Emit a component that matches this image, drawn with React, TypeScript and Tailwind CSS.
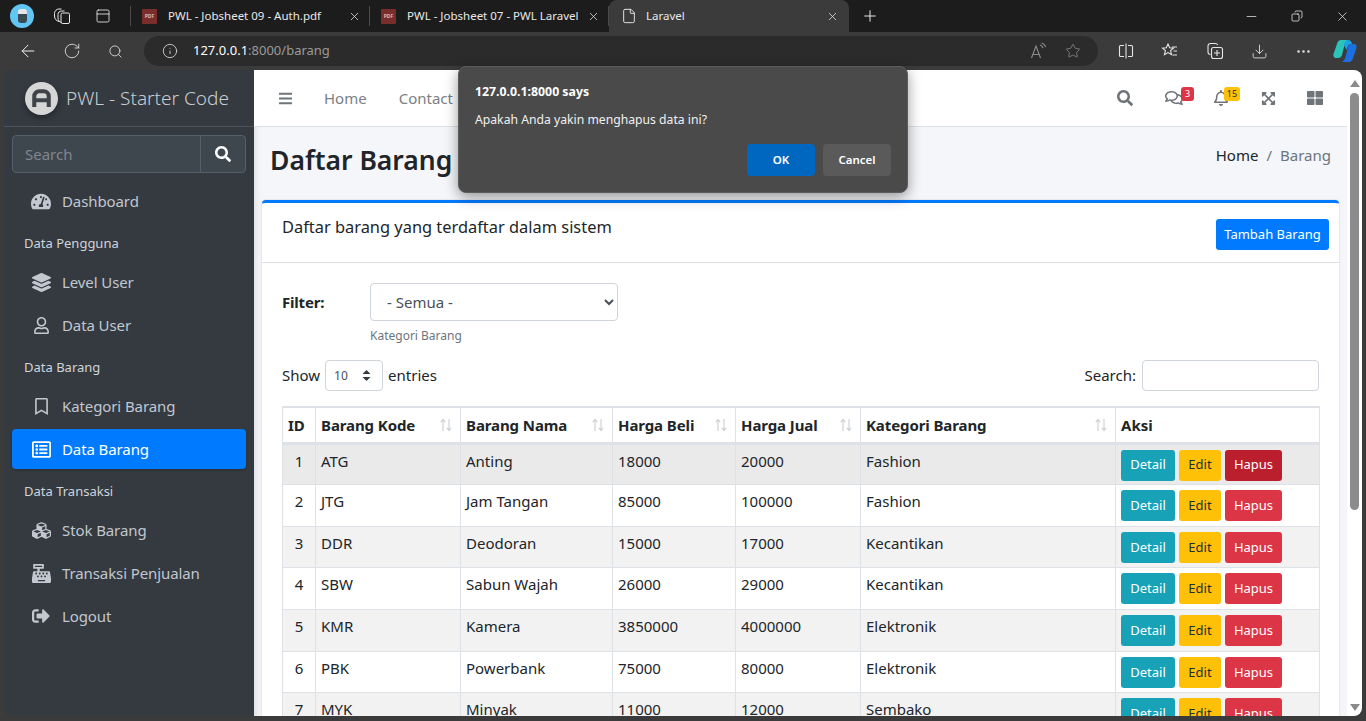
import React from 'react';
import {
  ArrowLeft,
  Copy,
  Download,
  Ellipsis,
  File,
  Info,
  Minus,
  PanelTop,
  Plus,
  RotateCw,
  Search,
  Star,
  X,
} from 'lucide-react';
import {
  FaBars,
  FaCashRegister,
  FaCubes,
  FaExpandArrowsAlt,
  FaRegBell,
  FaRegBookmark,
  FaRegComments,
  FaRegListAlt,
  FaRegUser,
  FaSearch,
  FaSignOutAlt,
  FaTachometerAlt,
  FaThLarge,
  FaLayerGroup,
} from 'react-icons/fa';

const rows = [
  ['1', 'ATG', 'Anting', '18000', '20000', 'Fashion'],
  ['2', 'JTG', 'Jam Tangan', '85000', '100000', 'Fashion'],
  ['3', 'DDR', 'Deodoran', '15000', '17000', 'Kecantikan'],
  ['4', 'SBW', 'Sabun Wajah', '26000', '29000', 'Kecantikan'],
  ['5', 'KMR', 'Kamera', '3850000', '4000000', 'Elektronik'],
  ['6', 'PBK', 'Powerbank', '75000', '80000', 'Elektronik'],
  ['7', 'MYK', 'Minyak', '11000', '12000', 'Sembako'],
];

function PdfIcon() {
  return (
    <div className="w-[15px] h-[15px] bg-[#7a2e2b] flex items-center justify-center rounded-[1px]">
      <span className="text-[5px] font-bold leading-none text-[#d8b5b3]">PDF</span>
    </div>
  );
}

function Tab({ title, pdf, active }: { title: string; pdf?: boolean; active?: boolean }) {
  return (
    <div
      className={
        active
          ? 'w-[240px] h-[32px] flex items-center pl-[12px] pr-[10px] bg-[#3b3b3b] rounded-t-[8px]'
          : 'w-[239px] h-[20px] flex items-center pl-[11px] pr-[8px] border-r border-[#4a4a4a] my-auto'
      }
    >
      {pdf ? <PdfIcon /> : <File size={16} strokeWidth={1.4} className="text-[#eeeeee]" />}
      <span className={'flex-1 text-[11.5px] text-[#e8e8e8] overflow-hidden whitespace-nowrap ' + (active ? 'ml-[9px]' : 'ml-[11px]')}>{title}</span>
      <X size={13} strokeWidth={1.4} className="text-[#e8e8e8]" />
    </div>
  );
}

function TabActionsIcon() {
  return (
    <svg width="18" height="18" viewBox="0 0 18 18" fill="none" stroke="#e8e8e8" strokeWidth="1">
      <path d="M6 14.500C3.500 14 1.500 12 1.500 9V6.500C1.500 4 3.500 2 6 2h2.500" />
      <path d="M8.500 15.500C6.500 15 5 13.500 5 11V7.500C5 5.500 6.500 4 8.500 4h3" />
      <rect x="8" y="6" width="8.500" height="10.500" rx="1.500" />
    </svg>
  );
}

function SplitIcon() {
  return (
    <svg width="16" height="16" viewBox="0 0 16 16" fill="none" stroke="#e6e6e6" strokeWidth="1.1">
      <path d="M6 2.500H2.500a1 1 0 0 0-1 1v9a1 1 0 0 0 1 1H6" />
      <path d="M10 2.500h3.500a1 1 0 0 1 1 1v9a1 1 0 0 1-1 1H10" />
      <path d="M8 0.500v15" />
    </svg>
  );
}

function FavListIcon() {
  return (
    <svg width="18" height="18" viewBox="0 0 18 18" fill="none" stroke="#e6e6e6" strokeWidth="1.1">
      <path d="M7 2l1.700 3.700 3.800.4-2.900 2.600.9 4-3.500-2.100-3.500 2.100.9-4L1.500 6.100l3.800-.4z" />
      <path d="M11 5h5M12.500 9H16M11.500 13H16" />
    </svg>
  );
}

function CollectionIcon() {
  return (
    <svg width="18" height="18" viewBox="0 0 18 18" fill="none" stroke="#e6e6e6" strokeWidth="1.1">
      <path d="M4.500 12.500A2.500 2.500 0 0 1 2 10V4a2.500 2.500 0 0 1 2.500-2.500h5a2.500 2.500 0 0 1 2.200 1.500" />
      <rect x="5.500" y="5.500" width="11" height="11" rx="2" />
      <path d="M11 8v6M8 11h6" />
    </svg>
  );
}

function ReadAloudIcon() {
  return (
    <svg width="18" height="18" viewBox="0 0 18 18" fill="none" stroke="#8c8c8c" strokeWidth="1.1">
      <path d="M1.500 16L6 4l4.500 12M3 12.500h6" />
      <path d="M10 3c1.500.5 2.500 1.500 3 3M11.500 1c2 .6 3.500 2 4.200 4" />
    </svg>
  );
}

function CopilotIcon() {
  return (
    <svg width="24" height="24" viewBox="0 0 24 24">
      <path d="M8 1h7c-2 1-3 3-3.500 5L9 16c-.5 2-2 3-4 3H3c-2 0-3-2-2.500-4L4 5c.7-2.500 2-4 4-4z" fill="#2cc4b8" />
      <path d="M16 23H9c2-1 3-3 3.500-5L15 8c.5-2 2-3 4-3h2c2 0 3 2 2.500 4L20 19c-.7 2.500-2 4-4 4z" fill="#1c6fe0" />
      <path d="M15 1c2 0 3.500 1.500 4 4h-1c-1.500 0-3 1-3.500 3l-1 3-2.500-5c.5-2 2-5 4-5z" fill="#1aa3e8" />
    </svg>
  );
}

function BrandLogo() {
  return (
    <div className="w-[33px] h-[33px] rounded-full bg-[#d6d6d6] flex items-center justify-center shadow-[0_3px_6px_rgba(0,0,0,0.35)]">
      <svg width="19" height="19" viewBox="0 0 21 21" fill="none" stroke="#40444a" strokeWidth="4.500">
        <path d="M2.500 20V8a5.500 5.500 0 0 1 5.500-5.500h5A5.500 5.500 0 0 1 18.500 8v12" />
        <path d="M3 12.500h15" />
      </svg>
    </div>
  );
}

function NavItem({ icon, label, active }: { icon: React.ReactNode; label: string; active?: boolean }) {
  return (
    <div
      className={
        'h-[40px] mb-[3px] flex items-center pl-[19px] rounded-[4px] text-[15px] ' +
        (active ? 'bg-[#007bff] text-white shadow-[0_1px_3px_rgba(0,0,0,0.25)]' : 'text-[#c2c7d0]')
      }
    >
      <span className="w-[20px] flex justify-center">{icon}</span>
      <span className="ml-[11px] tracking-[-0.1px]">{label}</span>
    </div>
  );
}

function NavHeader({ label }: { label: string }) {
  return <div className="h-[38px] flex items-center pl-[12px] pt-[1px] text-[13px] text-[#d0d4db]">{label}</div>;
}

function Sidebar() {
  return (
    <aside className="w-[250px] shrink-0 bg-[#343a40] flex flex-col">
      <div className="h-[57px] flex items-center pl-[21px] border-b border-[#4b545c]">
        <BrandLogo />
        <span className="ml-[8px] pt-[1px] text-[19px] font-light text-[#c9ccd0]">PWL - Starter Code</span>
      </div>
      <div className="px-[8px] pt-[8px]">
        <div className="h-[38px] flex rounded-[4px] border border-[#56606a] bg-[#3f474e] mb-[8px]">
          <div className="flex-1 flex items-center pl-[12px] pt-[1px] text-[15px] text-[#7f8790]">Search</div>
          <div className="w-[45px] border-l border-[#56606a] flex items-center justify-center">
            <FaSearch size={16} className="text-white" />
          </div>
        </div>
        <NavItem icon={<FaTachometerAlt size={21} />} label="Dashboard" />
        <NavHeader label="Data Pengguna" />
        <NavItem icon={<FaLayerGroup size={19} />} label="Level User" />
        <NavItem icon={<FaRegUser size={17} />} label="Data User" />
        <NavHeader label="Data Barang" />
        <NavItem icon={<FaRegBookmark size={17} />} label="Kategori Barang" />
        <NavItem icon={<FaRegListAlt size={19} />} label="Data Barang" active />
        <NavHeader label="Data Transaksi" />
        <NavItem icon={<FaCubes size={19} />} label="Stok Barang" />
        <NavItem icon={<FaCashRegister size={19} />} label="Transaksi Penjualan" />
        <NavItem icon={<FaSignOutAlt size={18} />} label="Logout" />
      </div>
    </aside>
  );
}

function TopNav() {
  return (
    <div className="h-[57px] shrink-0 bg-white border-b border-[#dee2e6] flex items-center">
      <FaBars size={15} className="ml-[24px] text-[#6f7479]" />
      <span className="ml-[31px] text-[15px] text-[#7a8085]">Home</span>
      <span className="ml-[32px] text-[15px] text-[#7a8085]">Contact</span>
      <div className="flex-1" />
      <FaSearch size={16} className="text-[#6f7479]" />
      <div className="relative ml-[32px] w-[18px]">
        <FaRegComments size={18} className="text-[#6f7479]" />
        <span className="absolute -top-[2px] left-[16px] w-[13px] h-[14px] rounded-[3px] bg-[#dc3545] text-white text-[9px] leading-[14px] text-center">
          3
        </span>
      </div>
      <div className="relative ml-[30px] w-[16px]">
        <FaRegBell size={16} className="text-[#6f7479]" />
        <span className="absolute -top-[3px] left-[11px] w-[16px] h-[14px] rounded-[3px] bg-[#ffc107] text-[#1f2d3d] text-[9px] leading-[14px] text-center">
          15
        </span>
      </div>
      <FaExpandArrowsAlt size={15} className="ml-[32px] text-[#6f7479]" />
      <FaThLarge size={16} className="ml-[31px] mr-[24px] text-[#6f7479]" />
    </div>
  );
}

function SortArrows() {
  return (
    <svg width="12" height="14" viewBox="0 0 12 14" fill="none" stroke="#cfd2d5" strokeWidth="1.200">
      <path d="M3 13V2M.8 4.200L3 1.500l2.200 2.700" />
      <path d="M9 1v11M6.800 9.800L9 12.500l2.200-2.700" />
    </svg>
  );
}

function BarangTable() {
  const th = 'border border-[#dee2e6] border-b-[3px] px-[5px] text-left align-middle font-bold';
  const td = 'border border-[#dee2e6] px-[5px] pt-[5px] align-top';
  const heads = ['Barang Kode', 'Barang Nama', 'Harga Beli', 'Harga Jual', 'Kategori Barang'];
  return (
    <table className="w-[1037px] table-fixed border-collapse text-[15px] text-[#212529] border-t-[2px] border-[#dee2e6]">
      <colgroup>
        <col className="w-[33px]" />
        <col className="w-[145px]" />
        <col className="w-[152px]" />
        <col className="w-[123px]" />
        <col className="w-[125px]" />
        <col className="w-[255px]" />
        <col className="w-[204px]" />
      </colgroup>
      <thead>
        <tr className="h-[36px]">
          <th className={th + ' text-center'}>ID</th>
          {heads.map((h) => (
            <th key={h} className={th}>
              <div className="flex items-center justify-between pr-[3px] tracking-[-0.1px]">
                <span>{h}</span>
                <SortArrows />
              </div>
            </th>
          ))}
          <th className={th}>Aksi</th>
        </tr>
      </thead>
      <tbody>
        {rows.map((r, i) => (
          <tr key={r[0]} className={'h-[41.67px] ' + (i === 0 ? 'bg-[#eaeaea]' : i % 2 === 0 ? 'bg-[#f2f2f2]' : 'bg-white')}>
            <td className={td + ' text-center'}>{r[0]}</td>
            {r.slice(1).map((c, j) => (
              <td key={j} className={td}>
                {c}
              </td>
            ))}
            <td className={td}>
              <div className="flex gap-[4px] text-[13px]">
                <span className="w-[54px] h-[31px] rounded-[3px] bg-[#17a2b8] text-white flex items-center justify-center">Detail</span>
                <span className="w-[42px] h-[31px] rounded-[3px] bg-[#ffc107] text-[#1f2d3d] flex items-center justify-center">Edit</span>
                <span className={'w-[57px] h-[31px] rounded-[3px] text-white flex items-center justify-center ' + (i === 0 ? 'bg-[#bb1f2e]' : 'bg-[#dc3545]')}>
                  Hapus
                </span>
              </div>
            </td>
          </tr>
        ))}
      </tbody>
    </table>
  );
}

function CardBody() {
  return (
    <div className="pl-[20px] pr-[20px] pt-[20px]">
      <div className="flex">
        <div className="w-[88px] pt-[8px] text-[15px] font-bold tracking-[-0.2px] text-[#212529]">Filter:</div>
        <div>
          <select className="w-[248px] h-[38px] rounded-[4px] border border-[#ced4da] bg-white pl-[12px] text-[15px] text-[#495057]">
            <option>- Semua -</option>
          </select>
          <div className="mt-[6px] text-[12px] text-[#6c757d]">Kategori Barang</div>
        </div>
      </div>
      <div className="mt-[15px] flex items-center text-[15px] text-[#212529]">
        <span>Show</span>
        <div className="relative ml-[5px] mr-[5px]">
          <select className="w-[58px] h-[31px] appearance-none rounded-[4px] border border-[#ced4da] bg-white pl-[8px] text-[12px] text-[#495057]">
            <option>10</option>
          </select>
          <svg className="absolute right-[12px] top-[10px]" width="9" height="11" viewBox="0 0 9 11" fill="#343a40">
            <path d="M4.500 0L8.500 4H.5zM4.500 11L.5 7h8z" />
          </svg>
        </div>
        <span>entries</span>
        <div className="flex-1" />
        <span>Search:</span>
        <div className="ml-[6px] w-[177px] h-[31px] rounded-[4px] border border-[#ced4da] bg-white" />
      </div>
      <div className="mt-[15px]">
        <BarangTable />
      </div>
    </div>
  );
}

function ContentArea() {
  return (
    <div className="flex-1 min-h-0 bg-[#f4f6f9] flex flex-col overflow-hidden shadow-[inset_8px_0_8px_-8px_rgba(0,0,0,0.15)]">
      <div className="h-[73px] shrink-0 flex items-start pl-[16px] pr-[16px]">
        <h1 className="mt-[14px] text-[26.500px] font-semibold text-[#212529]">Daftar Barang</h1>
        <div className="flex-1" />
        <div className="mt-[17px] text-[15px] text-[#212529]">
          Home<span className="mx-[8px] text-[#6c757d]">/</span>
          <span className="text-[#6c757d]">Barang</span>
        </div>
      </div>
      <div className="ml-[8px] mr-[8px] flex-1 bg-white border-t-[3px] border-[#007bff] rounded-t-[4px] shadow-[0_0_2px_rgba(0,0,0,0.2)]">
        <div className="h-[60px] flex items-start border-b border-[#dfdfdf] pl-[20px] pr-[10px]">
          <h3 className="mt-[12px] text-[16.400px] text-[#212529]">Daftar barang yang terdaftar dalam sistem</h3>
          <div className="flex-1" />
          <div className="mt-[16px] w-[113px] h-[31px] rounded-[3px] bg-[#007bff] text-white text-[13px] flex items-center justify-center">
            Tambah Barang
          </div>
        </div>
        <CardBody />
      </div>
    </div>
  );
}

function Scrollbar() {
  return (
    <div className="w-[15px] shrink-0 bg-white flex flex-col items-center">
      <svg className="mt-[10px]" width="10" height="7" viewBox="0 0 10 7" fill="#8a8a8a">
        <path d="M5 0l5 7H0z" />
      </svg>
      <div className="mt-[6px] w-[9px] h-[417px] rounded-[5px] bg-[#8c8c8c]" />
      <div className="flex-1" />
      <svg className="mb-[5px]" width="10" height="7" viewBox="0 0 10 7" fill="#8a8a8a">
        <path d="M5 7L0 0h10z" />
      </svg>
    </div>
  );
}

function ConfirmDialog() {
  return (
    <div className="absolute left-[458px] top-[66px] w-[450px] h-[127px] rounded-[8px] border border-[#5c5c5c] bg-[#4a4a4a] shadow-[0_4px_14px_rgba(0,0,0,0.4)] pl-[16px] pr-[16px] pt-[16px] text-white">
      <div className="text-[12.300px] font-bold leading-[18px]">127.0.0.1:8000 says</div>
      <div className="mt-[10px] text-[12.200px] leading-[18px] text-[#f0f0f0]">Apakah Anda yakin menghapus data ini?</div>
      <div className="mt-[15px] flex justify-end gap-[8px]">
        <div className="w-[68px] h-[32px] rounded-[4px] bg-[#0067c0] flex items-center justify-center text-[11.500px] font-semibold">OK</div>
        <div className="w-[68px] h-[32px] rounded-[4px] bg-[#5a5a5a] flex items-center justify-center text-[11.500px] font-semibold">Cancel</div>
      </div>
    </div>
  );
}

export default function App() {
  return (
    <div className="relative w-[1366px] h-[721px] overflow-hidden bg-[#3b3b3b] flex flex-col font-['Noto_Sans',sans-serif]">
      {/* Browser tabs */}
      <div className="h-[32px] shrink-0 bg-[#1c1c1c] flex items-center">
        <div className="ml-[10px] w-[24px] h-[24px] rounded-full bg-[#62c6f5] flex items-center justify-center">
          <div className="w-[9px] h-[14px] rounded-[3px] bg-[#3a4a55] border-t-[5px] border-[#e6e6e6]" />
        </div>
        <div className="ml-[19px]">
          <TabActionsIcon />
        </div>
        <PanelTop size={16} strokeWidth={1.3} className="ml-[24px] text-[#e8e8e8]" />
        <div className="ml-[19px] h-[20px] border-l border-[#4a4a4a]" />
        <Tab title="PWL - Jobsheet 09 - Auth.pdf" pdf />
        <Tab title="PWL - Jobsheet 07 - PWL Laravel" pdf />
        <Tab title="Laravel" active />
        <Plus size={18} strokeWidth={1.3} className="ml-[12px] text-[#eeeeee]" />
        <div className="flex-1" />
        <Minus size={15} strokeWidth={1.2} className="text-[#e8e8e8]" />
        <Copy size={12} strokeWidth={1.5} className="ml-[32px] -scale-x-100 text-[#f0f0f0]" />
        <X size={15} strokeWidth={1.2} className="ml-[32px] mr-[16px] text-[#e8e8e8]" />
      </div>

      {/* Toolbar */}
      <div className="h-[38px] shrink-0 bg-[#3b3b3b] flex items-center">
        <ArrowLeft size={20} strokeWidth={1.2} className="ml-[18px] text-[#eeeeee]" />
        <RotateCw size={18} strokeWidth={1.2} className="ml-[25px] text-[#dddddd]" />
        <Search size={15} strokeWidth={1.4} className="ml-[27px] text-[#dddddd]" />
        <div className="ml-[21px] w-[954px] h-[30px] rounded-full bg-[#2b2b2b] flex items-center pl-[18px] pr-[16px]">
          <Info size={16} strokeWidth={1.3} className="text-[#d8d8d8]" />
          <span className="ml-[15px] text-[13px] text-white">127.0.0.1</span>
          <span className="text-[13px] text-[#9a9a9a]">:8000/barang</span>
          <div className="flex-1" />
          <ReadAloudIcon />
          <Star size={16} strokeWidth={1.2} className="ml-[17px] text-[#8c8c8c]" />
          <div className="w-[1px]" />
        </div>
        <div className="ml-[20px]">
          <SplitIcon />
        </div>
        <div className="ml-[27px]">
          <FavListIcon />
        </div>
        <div className="ml-[27px]">
          <CollectionIcon />
        </div>
        <Download size={17} strokeWidth={1.2} className="ml-[27px] text-[#e6e6e6]" />
        <Ellipsis size={17} strokeWidth={1.6} className="ml-[27px] text-[#e6e6e6]" />
        <div className="ml-[21px]">
          <CopilotIcon />
        </div>
      </div>

      {/* Page viewport */}
      <div className="flex-1 min-h-0 flex pl-[4px] pr-[4px] pb-[5px]">
        <div className="flex-1 flex rounded-[8px] overflow-hidden">
          <Sidebar />
          <div className="flex-1 min-w-0 flex flex-col">
            <TopNav />
            <ContentArea />
          </div>
          <Scrollbar />
        </div>
      </div>

      <ConfirmDialog />
    </div>
  );
}
